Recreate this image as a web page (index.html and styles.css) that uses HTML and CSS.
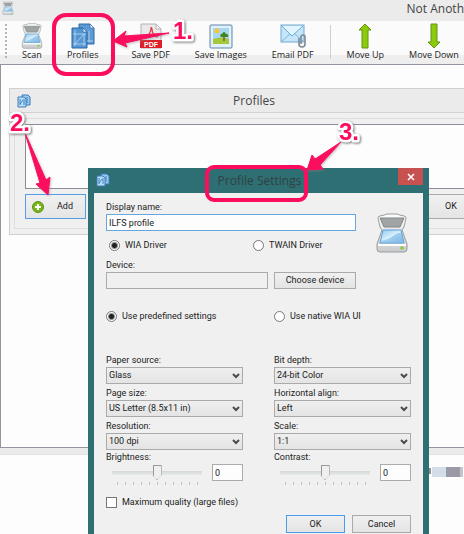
FILE: index.html
```html
<!DOCTYPE html>
<html lang="en">
<head>
<meta charset="utf-8">
<title>Scanner profiles</title>
<link rel="stylesheet" href="styles.css">
</head>
<body>
<svg class="defs" aria-hidden="true">
  <defs>
    <linearGradient id="glass" x1="0" y1="0" x2="1" y2="1"><stop offset="0" stop-color="#8fc8f0"/><stop offset=".5" stop-color="#dcf1fd"/><stop offset="1" stop-color="#7dbbe8"/></linearGradient>
    <linearGradient id="shell" x1="0" y1="0" x2="0" y2="1"><stop offset="0" stop-color="#fdfdfd"/><stop offset="1" stop-color="#c9cbcc"/></linearGradient>
    <symbol id="scanner" viewBox="0 0 32 40">
      <path d="M4 3Q9 2 11 1h10q2 1 7 2 2 0 2 2l-2 9-2 3 5 14v5q0 3-3 3H4q-3 0-3-3v-5l5-14-2-3-2-9q0-2 2-2z" fill="url(#shell)" stroke="#999c9e"/>
      <path d="M4 5h24l-4 9H8z" fill="#a1a4a5" stroke="#858889"/>
      <path d="M7 17h18l3 13H4z" fill="url(#glass)" stroke="#5a9fd2"/>
      <path d="M4 28q8-1 13-5t9-3l2 10H4z" fill="#79b7e4" opacity=".6"/>
      <path d="M2 32h28" stroke="#fff" stroke-width="2"/>
      <circle cx="26" cy="35" r="1.7" fill="#8ac832"/>
    </symbol>
    <symbol id="profiles" viewBox="0 0 24 26">
      <path d="M8 1h11l4 4v16H8z" fill="#5c9ad3" stroke="#2d6aa8"/>
      <path d="M19 1v4h4z" fill="#d8ebfa" stroke="#2d6aa8" stroke-width=".6"/>
      <path d="M1 5h11l4 4v16H1z" fill="#5697d3" stroke="#2967a6"/>
      <path d="M12 5v4h4z" fill="#d8ebfa" stroke="#2967a6" stroke-width=".6"/>
      <path d="M4 7v16M13 11v12M2 11h13M2 21h13M4 21l9-10M18 8v11M16 18h6" fill="none" stroke="#c9e2f7" stroke-width=".7"/>
    </symbol>
    <symbol id="profiles-small" viewBox="0 0 14 14">
      <path d="M5 1h6l2 2v8H5z" fill="#9bc9ee" stroke="#3c7db8"/>
      <path d="M1 3h6l2 2v8H1z" fill="#b9dcf6" stroke="#3c7db8"/>
      <path d="M3 5v6M3 10l3-4M7 5v6M10 3v6" stroke="#3d82c2" fill="none"/>
    </symbol>
    <symbol id="chevron" viewBox="0 0 8 6"><path d="M1 1l3 3 3-3" fill="none" stroke="#4b4b4b" stroke-width="2"/></symbol>
  </defs>
</svg>

<main class="desktop">
  <section class="app">
    <header class="app-title">
      <svg class="icon-app"><use href="#scanner"/></svg>
      <span>Not Anoth</span>
    </header>
    <nav class="toolbar">
      <span class="grip"></span>
      <button class="tool"><svg class="tool-icon"><use href="#scanner"/></svg>Scan</button>
      <button class="tool"><svg class="tool-icon"><use href="#profiles"/></svg>Profiles</button>
      <span class="divider"></span>
      <button class="tool"><svg class="tool-icon" viewBox="0 0 24 26">
        <path d="M2 1h15l5 5v19H2z" fill="#e9e9e9" stroke="#b2b2b2"/><path d="M17 1v5h5z" fill="#fff" stroke="#b2b2b2"/>
        <path d="M6 15q5-3 6-9 0-3 1 0 0 6 6 8-6-2-13 1" fill="none" stroke="#e33b3f" stroke-width="1.3"/>
        <rect x="1" y="17" width="22" height="8" fill="#dd2027"/><text x="12" y="23.6" class="pdf-mark">PDF</text></svg>Save PDF</button>
      <button class="tool"><svg class="tool-icon" viewBox="0 0 24 26">
        <rect x="1" y="2" width="22" height="23" rx="1" fill="#e3eff9" stroke="#5b86ab"/>
        <rect x="4" y="5" width="16" height="16" fill="#a5d6f2"/><path d="M4 16q8-3 16 0v5H4z" fill="#a3c83c"/>
        <circle cx="8" cy="8" r="2.4" fill="#fbc52b"/><path d="M15 13v5" stroke="#80592a" stroke-width="1.5"/>
        <path d="M12 14q-2-3 1-3 2-4 4 0 3 0 2 3z" fill="#3f851d"/></svg>Save Images</button>
      <button class="tool"><svg class="tool-icon" viewBox="0 0 26 26">
        <rect x="1" y="2" width="23" height="17" fill="#c4e5fa" stroke="#72a9d1"/>
        <path d="M2 18l8-7M23 18l-8-7" stroke="#7fb5dc"/><path d="M2 3l10 10 11-10" fill="#e2f4fe" stroke="#6caad6"/>
        <path d="M19 15v6q0 3 3 3t3-3v-7q0-2-2-2t-2 2v7" fill="none" stroke="#7e8994" stroke-width="1.6"/></svg>Email PDF</button>
      <span class="divider"></span>
      <button class="tool"><svg class="tool-icon" viewBox="0 0 24 26"><path d="M12 1l6 6h-3v18H9V7H6z" fill="#8ccb0b" stroke="#639217"/></svg>Move Up</button>
      <button class="tool"><svg class="tool-icon" viewBox="0 0 24 26"><path d="M12 25l6-6h-3V1H9v18H6z" fill="#8ccb0b" stroke="#639217"/></svg>Move Down</button>
    </nav>
    <div class="canvas"></div>
  </section>

  <div class="behind"><i class="tick-mark"></i><i class="block pale"></i><i class="block dark"></i><i class="block mid"></i></div>

  <section class="window profiles">
    <header class="profiles-title"><svg class="icon-small"><use href="#profiles-small"/></svg><h2>Profiles</h2></header>
    <div class="profiles-body">
      <div class="group">
        <div class="list"></div>
        <div class="actions">
          <button class="action add"><svg class="plus" viewBox="0 0 12 12"><circle cx="6" cy="6" r="5.5" fill="#79b51c" stroke="#5c9311"/><path d="M6 3v6M3 6h6" stroke="#fff" stroke-width="2"/></svg><span>Add</span></button>
          <button class="action">OK</button>
        </div>
      </div>
    </div>
  </section>

  <section class="window settings">
    <header class="settings-title">
      <svg class="icon-small"><use href="#profiles-small"/></svg><h2>Profile Settings</h2>
      <button class="close" aria-label="Close"><svg viewBox="0 0 8 8"><path d="M1 1l6 6M7 1L1 7" stroke="#fff" stroke-width="1.6"/></svg></button>
    </header>
    <form class="settings-body">
      <div class="top">
        <div class="identity">
          <label for="name">Display name:</label>
          <input class="text focused" id="name" type="text" value="ILFS profile">
          <div class="driver">
            <label class="option"><input type="radio" name="driver" checked>WIA Driver</label>
            <label class="option"><input type="radio" name="driver">TWAIN Driver</label>
          </div>
          <label for="device">Device:</label>
          <div class="device">
            <input class="text muted" id="device" type="text" readonly>
            <button class="push" type="button">Choose device</button>
          </div>
        </div>
        <svg class="icon-scanner"><use href="#scanner"/></svg>
      </div>
      <div class="columns mode">
        <label class="option"><input type="radio" name="mode" checked>Use predefined settings</label>
        <label class="option"><input type="radio" name="mode">Use native WIA UI</label>
      </div>
      <div class="columns fields">
        <div class="field"><label for="source">Paper source:</label><div class="pick"><select id="source"><option>Glass</option></select><svg><use href="#chevron"/></svg></div></div>
        <div class="field"><label for="depth">Bit depth:</label><div class="pick"><select id="depth"><option>24-bit Color</option></select><svg><use href="#chevron"/></svg></div></div>
        <div class="field"><label for="size">Page size:</label><div class="pick"><select id="size"><option>US Letter (8.5x11 in)</option></select><svg><use href="#chevron"/></svg></div></div>
        <div class="field"><label for="align">Horizontal align:</label><div class="pick"><select id="align"><option>Left</option></select><svg><use href="#chevron"/></svg></div></div>
        <div class="field"><label for="res">Resolution:</label><div class="pick"><select id="res"><option>100 dpi</option></select><svg><use href="#chevron"/></svg></div></div>
        <div class="field"><label for="scale">Scale:</label><div class="pick"><select id="scale"><option>1:1</option></select><svg><use href="#chevron"/></svg></div></div>
      </div>
      <div class="columns levels">
        <div class="field"><label for="bright">Brightness:</label><div class="level"><div class="slide"><input id="bright" type="range" min="-5" max="5" value="0"><div class="ticks"></div></div><input class="text number" type="text" value="0" aria-label="Brightness value"></div></div>
        <div class="field"><label for="contrast">Contrast:</label><div class="level"><div class="slide"><input id="contrast" type="range" min="-5" max="5" value="0"><div class="ticks"></div></div><input class="text number" type="text" value="0" aria-label="Contrast value"></div></div>
      </div>
      <label class="option quality"><input type="checkbox">Maximum quality (large files)</label>
      <div class="buttons"><button class="push default" type="button">OK</button><button class="push" type="button">Cancel</button></div>
    </form>
  </section>

  <svg class="notes" viewBox="0 0 464 534">
    <g class="outline"><rect x="54" y="15" width="59" height="59" rx="12"/><rect x="207" y="167" width="99" height="33" rx="7"/></g>
    <g class="arrows"><path d="M113 41l13-10-2 5 45-3-44 10 2 4z"/><path d="M25 133l21 47 4-3-2 18-12-11 4-1z"/><path d="M341 142l-21 23 3 4-16 1 5-15 3 4z"/></g>
    <g class="numbers"><text x="173" y="39">1.</text><text x="10" y="131">2.</text><text x="339" y="140">3.</text></g>
  </svg>
</main>
</body>
</html>
```
FILE: styles.css
```css
* { box-sizing: border-box; }
body { margin: 0; overflow: hidden; font: 9px/13px Roboto, "Liberation Sans", sans-serif; color: #222; background: #fdfdfd; }
button, input, select { font: inherit; color: inherit; margin: 0; }
h2 { margin: 0; font-weight: 400; }
.defs { position: absolute; width: 0; height: 0; }
.desktop { position: relative; height: 100vh; overflow: hidden; }

.app { background: #ebebeb; padding-bottom: 6px; border-bottom: 1px solid #e0e0e0; }
.app-title { display: flex; justify-content: space-between; height: 21px; color: #444; font: 12px/17px "Open Sans", sans-serif; white-space: nowrap; }
.icon-app { width: 12px; height: 14px; margin: 1px 2px; }
.toolbar { display: flex; gap: 1px; height: 43px; overflow: hidden; background: linear-gradient(#fbfbfb 0 34px, #eee 34px); }
.grip { flex: none; width: 2px; height: 34px; margin: 3px 2px 0 5px; background: repeating-linear-gradient(#b5b5b5 0 2px, transparent 2px 4px); }
.tool { flex: none; display: flex; flex-direction: column; align-items: center; padding: 2px 12px 0; border: 0; background: none; font: 9px/12px "Open Sans", sans-serif; white-space: nowrap; }
.tool-icon { width: 26px; height: 26px; margin: 0 -3px; }
.divider { flex: none; width: 1px; height: 34px; margin: 4px 3px 0; background: #d0d0d0; }
.pdf-mark { font: bold 7px "Liberation Sans", sans-serif; fill: #fff; text-anchor: middle; }
.canvas { height: 384px; background: #fdfdfd; border: 1px solid #94949e; border-right: 0; }

.behind { position: absolute; left: 429px; top: 467px; display: flex; height: 10px; }
.tick-mark { width: 2px; height: 6px; margin: 1px 1px 0 0; background: #8d8e96; }
.block { width: 14px; }
.pale { background: #d3dde9; }
.dark { background: #999aa6; }
.mid { width: 3px; background: #c3c4c6; }

.window { position: absolute; }
.icon-small { width: 14px; height: 14px; }
.profiles { left: 9px; right: -35px; top: 88px; background: #ebebeb; border: 1px solid #cfcfcf; }
.profiles-title { display: grid; grid-template-columns: 14px 1fr 14px; align-items: center; height: 24px; padding: 0 7px; border-bottom: 1px solid #d2d2d2; }
.profiles-title h2 { text-align: center; font: 12px/16px "Open Sans", sans-serif; color: #444; }
.profiles-body { padding: 5px 4px; background: #f0f0f0; }
.group { padding: 5px 10px 9px; border: 1px solid #dedede; background: #f0f0f0; }
.list { height: 65px; background: #fdfdfd; border: 1px solid #8c8c98; }
.actions { display: flex; justify-content: space-between; margin-top: 5px; }
.action { width: 64px; height: 25px; padding: 0; border: 1px solid #aaa; background: linear-gradient(#f0f0f0, #e5e5e5); }
.add { display: flex; align-items: center; gap: 13px; width: 61px; padding-left: 6px; border-color: #569de5; }
.plus { width: 12px; height: 12px; }

.settings { left: 88px; right: 35px; top: 168px; padding: 0 6px 6px; background: #2d6f72; }
.settings-title { display: grid; grid-template-columns: 25px 1fr 25px; height: 25px; padding-left: 2px; }
.settings-title .icon-small { margin-top: 5px; }
.settings-title h2 { text-align: center; font: 12px/25px "Open Sans", sans-serif; color: #333f43; }
.close { display: grid; place-items: center; height: 17px; padding: 0; border: 0; background: #c75050; }
.close svg { width: 8px; height: 8px; }
.settings-body { padding: 8px 12px; background: #f0f0f0; }
.settings-body label { display: block; height: 13px; white-space: nowrap; }
.top { display: flex; justify-content: space-between; align-items: flex-start; }
.identity { flex: none; width: 250px; }
.icon-scanner { width: 32px; height: 40px; margin: 12px 3px 0 0; }
.text { display: block; width: 100%; height: 17px; padding: 0 2px; border: 1px solid #ababab; border-radius: 0; background: #fdfdfd; outline: 0; }
.text.focused { border-color: #69a6dd; }
.text.muted { background: #f0f0f0; }
.driver { display: grid; grid-template-columns: 144px 1fr; padding: 7px 3px; }
.settings-body .option { display: flex; align-items: center; height: 14px; gap: 5px; }
.option input { appearance: none; flex: none; width: 11px; height: 11px; border: 1px solid #777; background: #fff; }
.option input[type="radio"] { border-radius: 50%; }
.option input[type="radio"]:checked { background: radial-gradient(circle, #222 0 2px, #fff 4px); }
.device { display: grid; grid-template-columns: 162px 82px; gap: 6px; }
.push { height: 17px; padding: 0; border: 1px solid #aaa; background: linear-gradient(#f0f0f0, #e4e4e4); white-space: nowrap; }
.push.default { border: 1px solid #4a9be8; }
.columns { display: grid; grid-template-columns: 1fr 1fr; column-gap: 31px; }
.mode { padding: 20px 0 31px; }
.fields { row-gap: 3px; }
.pick { position: relative; }
.pick select { display: block; appearance: none; width: 100%; height: 17px; padding: 0 2px; border: 1px solid #aaa; border-radius: 0; background: linear-gradient(#efefef, #e4e4e4); }
.pick svg { position: absolute; right: 3px; top: 6px; width: 8px; height: 6px; pointer-events: none; }
.levels { margin-top: 1px; }
.level { display: flex; justify-content: space-between; }
.slide { width: 90px; margin-left: 6px; }
.slide input { appearance: none; display: block; width: 100%; height: 17px; background: linear-gradient(#d5d8d8, #e7eaea) center / 100% 4px no-repeat; }
.slide input::-webkit-slider-thumb { appearance: none; width: 9px; height: 15px; background: #999; clip-path: polygon(0 0, 100% 0, 100% 67%, 50% 100%, 0 67%); box-shadow: inset 0 0 0 1px #999, inset 0 0 0 9px #efefef; }
.ticks { width: 81px; height: 3px; margin: 1px auto 0; background: repeating-linear-gradient(90deg, #c0c0c0 0 1px, transparent 1px 8px); }
.text.number { width: 31px; }
.settings-body .quality { margin-top: 10px; }
.buttons { display: flex; justify-content: flex-end; gap: 7px; margin-top: 6px; }
.buttons .push { width: 59px; height: 18px; }

.notes { position: absolute; left: 0; top: 0; width: 464px; height: 534px; pointer-events: none; }
.outline { fill: none; stroke: #fb0e5d; stroke-width: 4; }
.arrows { fill: #fb0e5d; stroke: #fb0e5d; stroke-linejoin: round; filter: drop-shadow(1px 1px 1px #8888); }
.numbers { font: bold 24px "Liberation Sans", sans-serif; fill: #fb0e5d; stroke: #fff; stroke-width: 5; stroke-linejoin: round; paint-order: stroke; filter: drop-shadow(1px 1px 1px #777); }
```
